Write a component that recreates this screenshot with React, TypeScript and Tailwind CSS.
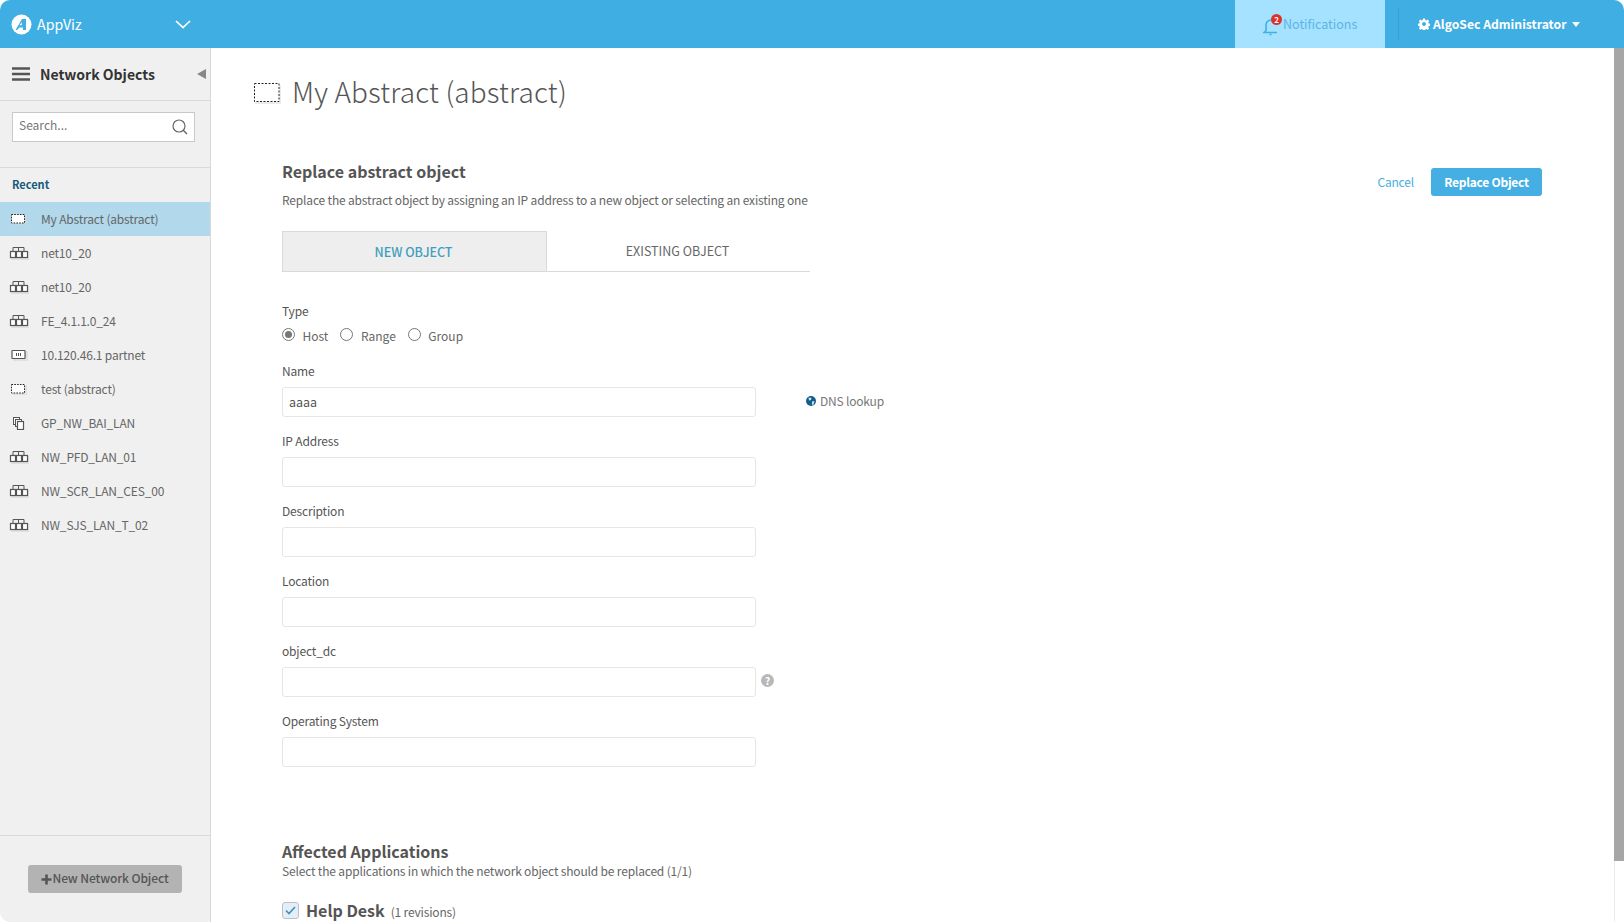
import React from "react";

const NetIcon = () => (
  <svg width="20" height="14" viewBox="0 0 20 14" className="shrink-0">
    <rect x="2" y="6" width="18" height="8" fill="#d9d9d9" opacity="0.7" />
    <path d="M4 5V1.5H15V5M9.5 1.5V5" fill="none" stroke="#555" strokeWidth="1" />
    <rect x="1.5" y="5.5" width="5" height="6" fill="#fff" stroke="#555" strokeWidth="1.2" />
    <rect x="7.5" y="5.5" width="5" height="6" fill="#fff" stroke="#555" strokeWidth="1.2" />
    <rect x="13.5" y="5.5" width="5" height="6" fill="#fff" stroke="#555" strokeWidth="1.2" />
  </svg>
);

const HostIcon = () => (
  <svg width="20" height="14" viewBox="0 0 20 14" className="shrink-0">
    <rect x="4" y="3" width="15" height="10" fill="#d9d9d9" opacity="0.7" />
    <rect x="3" y="2.5" width="13" height="8" rx="0.5" fill="#fff" stroke="#555" strokeWidth="1.2" />
    <path d="M7.5 5v3M9.5 5v3M11.5 5v3" stroke="#555" strokeWidth="1" />
  </svg>
);

const AbstractIcon = () => (
  <svg width="20" height="14" viewBox="0 0 20 14" className="shrink-0">
    <rect x="3" y="3" width="15" height="10" fill="#d5d5d5" opacity="0.6" />
    <rect x="2.5" y="2.5" width="13" height="8.5" fill="#fff" stroke="#222" strokeWidth="1" strokeDasharray="1.6 1.2" />
  </svg>
);

const GroupIcon = () => (
  <svg width="20" height="14" viewBox="0 0 20 14" className="shrink-0">
    <rect x="4.5" y="1.5" width="6" height="7" fill="#fff" stroke="#555" strokeWidth="1" />
    <rect x="6.5" y="3.5" width="6" height="7" fill="#fff" stroke="#555" strokeWidth="1" />
    <rect x="8.5" y="5.5" width="6" height="8" fill="#fff" stroke="#555" strokeWidth="1.2" />
  </svg>
);

const items: [string, React.ReactNode][] = [
  ["net10_20", <NetIcon />],
  ["net10_20", <NetIcon />],
  ["FE_4.1.1.0_24", <NetIcon />],
  ["10.120.46.1 partnet", <HostIcon />],
  ["test (abstract)", <AbstractIcon />],
  ["GP_NW_BAI_LAN", <GroupIcon />],
  ["NW_PFD_LAN_01", <NetIcon />],
  ["NW_SCR_LAN_CES_00", <NetIcon />],
  ["NW_SJS_LAN_T_02", <NetIcon />],
];

const Field = ({ label, value, after }: { label: string; value?: string; after?: React.ReactNode }) => (
  <div className="h-[70px]">
    <div className="h-[26px] text-[12px] tracking-[-0.17px] leading-[20px] text-[#555]">{label}</div>
    <div className="flex items-center">
      <div className="w-[474px] h-[30px] border border-[#e6e6e6] rounded-[3px] px-[6px] text-[12.5px] leading-[28px] text-[#555]">
        {value}
      </div>
      {after}
    </div>
  </div>
);

const Radio = ({ label, on, cls }: { label: string; on?: boolean; cls: string }) => (
  <div className={`flex items-center ${cls}`}>
    <span className="w-[13px] h-[13px] rounded-full border border-[#777] bg-white flex items-center justify-center -mt-[3px]">
      {on && <span className="w-[7px] h-[7px] rounded-full bg-[#777]" />}
    </span>
    <span className="ml-[7.5px] text-[12px] leading-[20px] text-[#666]">{label}</span>
  </div>
);

export default function App() {
  return (
    <div className="w-[1624px] h-[922px] overflow-hidden rounded-[10px] flex flex-col bg-white font-['Noto_Sans_CJK_SC',sans-serif]">
      <header className="h-[48px] shrink-0 bg-[#3faee2] flex items-stretch text-white">
        <div className="flex items-center w-[211px] pl-[11px] pr-[20px]">
          <svg width="21" height="21" viewBox="0 0 21 21" className="shrink-0">
            <circle cx="10.5" cy="10.5" r="10" fill="#fff" />
            <path d="M11 5h4v11h-3v-2.5H8.5L6 16H4.5z" fill="#3faee2" />
            <path d="M10.8 8.2v3h-2.4z" fill="#fff" />
          </svg>
          <span className="ml-[5px] text-[14.2px] leading-[24px]">AppViz</span>
          <svg width="16" height="9" viewBox="0 0 16 9" className="ml-auto">
            <path d="M1 1l7 6.5L15 1" fill="none" stroke="#fff" strokeWidth="1.7" />
          </svg>
        </div>
        <div className="flex-1" />
        <div className="w-[150px] bg-[#a5e2ff] flex items-center pl-[28px]">
          <span className="relative w-[20px] h-[24px] shrink-0">
            <svg width="16" height="18" viewBox="0 0 16 18" className="absolute left-0 top-[6px]">
              <path d="M3 13V7a5 5 0 0 1 5-5M3 13l-2 1.5h13M6.5 16.5h2" fill="none" stroke="#3faee2" strokeWidth="1.6" />
            </svg>
            <span className="absolute left-[8px] top-[2px] w-[11px] h-[11px] rounded-full bg-[#d9342b] text-white text-[8px] leading-[11px] text-center font-bold">2</span>
          </span>
          <span className="text-[12.5px] leading-[20px] text-[#5cb5e6]">Notifications</span>
        </div>
        <div className="w-[239px] flex items-center">
          <div className="w-px h-[32px] bg-[#37a0d2] ml-[13px]" />
          <svg width="12" height="12" viewBox="0 0 24 24" className="ml-[19px]" fill="#fff">
            <path fillRule="evenodd" d="M10 1h4l.6 3 2.2.9 2.6-1.7 2.8 2.8-1.7 2.6.9 2.2 3 .6v4l-3 .6-.9 2.2 1.7 2.6-2.8 2.8-2.6-1.7-2.2.9-.6 3h-4l-.6-3-2.2-.9-2.6 1.7-2.8-2.8 1.7-2.6-.9-2.2-3-.6v-4l3-.6.9-2.2-1.7-2.6 2.8-2.8 2.6 1.7 2.2-.9zM12 8a4 4 0 1 0 0 8 4 4 0 0 0 0-8z" />
          </svg>
          <span className="ml-[3px] text-[12.2px] leading-[20px] font-bold">AlgoSec Administrator</span>
          <span className="ml-[6px] w-0 h-0 border-x-[4px] border-x-transparent border-t-[5px] border-t-white" />
        </div>
      </header>

      <div className="flex-1 flex min-h-0">
        <aside className="w-[211px] shrink-0 bg-[#f0f0f0] border-r border-[#d9d9d9] flex flex-col">
          <div className="h-[53px] shrink-0 border-b border-[#d9d9d9] flex items-center pl-[12px] pr-[4px]">
            <svg width="18" height="14" viewBox="0 0 18 14" className="shrink-0">
              <path d="M0 1.5h18M0 7h18M0 12.5h18" stroke="#555" strokeWidth="2.6" />
            </svg>
            <span className="ml-[10px] text-[14px] leading-[22px] font-bold text-[#333]">Network Objects</span>
            <span className="ml-auto w-0 h-0 border-y-[5px] border-y-transparent border-r-[9px] border-r-[#888]" />
          </div>
          <div className="h-[67px] shrink-0 border-b border-[#d9d9d9] pl-[12px] pt-[11px]">
            <div className="w-[183px] h-[30px] bg-white border border-[#c9c9c9] flex items-center pl-[6px] pr-[6px]">
              <span className="text-[12px] leading-[20px] -mt-[4px] text-[#777]">Search...</span>
              <svg width="16" height="16" viewBox="0 0 16 16" className="ml-auto">
                <circle cx="7" cy="7" r="6" fill="none" stroke="#666" strokeWidth="1.2" />
                <path d="M11 11l4 4" stroke="#666" strokeWidth="1.4" />
              </svg>
            </div>
          </div>
          <div className="h-[34px] shrink-0 pl-[12px] pt-[7px] text-[11px] leading-[18px] font-bold text-[#135a7c]">Recent</div>
          <div className="h-[34px] shrink-0 bg-[#b1d8eb] flex items-center pl-[9px]">
            <AbstractIcon />
            <span className="ml-[12px] -mt-[1px] text-[12px] tracking-[-0.18px] leading-[18px] text-[#666]">My Abstract (abstract)</span>
          </div>
          {items.map(([t, ic], i) => (
            <div key={i} className="h-[34px] shrink-0 flex items-center pl-[9px]">
              {ic}
              <span className="ml-[12px] -mt-[1px] text-[12px] tracking-[-0.18px] leading-[18px] text-[#666]">{t}</span>
            </div>
          ))}
          <div className="mt-auto h-[87px] shrink-0 border-t border-[#d9d9d9] pl-[28px] pt-[29px]">
            <div className="w-[154px] h-[28px] bg-[#b3b3b3] rounded-[3px] flex items-center justify-center text-[12px] tracking-[-0.1px] leading-[20px] text-[#555] font-medium">
              <svg width="11" height="11" viewBox="0 0 11 11" className="shrink-0">
                <path d="M5.5 0.5v10M0.5 5.5h10" stroke="#555" strokeWidth="2.6" />
              </svg>
              <span className="-mt-[2px]">New Network Object</span>
            </div>
          </div>
        </aside>

        <main className="flex-1 min-w-0 overflow-hidden pl-[42px]">
          <div className="flex items-center h-[40px] mt-[25px]">
            <svg width="28" height="22" viewBox="0 0 28 22" className="shrink-0">
              <rect x="2" y="3" width="26" height="19" fill="#ddd" opacity="0.6" />
              <rect x="1.5" y="1.5" width="24.5" height="18" fill="#fff" stroke="#222" strokeWidth="1" strokeDasharray="2 1.5" />
            </svg>
            <h1 className="ml-[11px] -mt-[4px] text-[28px] tracking-[0.15px] leading-[40px] font-light text-[#555]">My Abstract (abstract)</h1>
          </div>

          <div className="ml-[29px] w-[1261px] mt-[45px] flex justify-between">
            <div>
              <h2 className="text-[16px] leading-[26px] font-bold text-[#555]">Replace abstract object</h2>
              <p className="mt-[6px] text-[12px] tracking-[-0.17px] leading-[20px] text-[#666]">
                Replace the abstract object by assigning an IP address to a new object or selecting an existing one
              </p>
            </div>
            <div className="flex items-center h-[28px] mt-[10px] pr-px">
              <span className="text-[12px] tracking-[-0.17px] leading-[20px] text-[#45aee3]">Cancel</span>
              <span className="ml-[17px] w-[111px] h-[28px] bg-[#45aee3] rounded-[3px] text-white text-[12px] tracking-[-0.25px] leading-[27px] text-center font-bold">Replace Object</span>
            </div>
          </div>

          <div className="ml-[29px] mt-[21px]">
            <div className="flex w-[528px] h-[41px] border-b border-[#d9d9d9]">
              <div className="w-[265px] bg-[#eeeeee] border-t border-x border-[#d9d9d9] pr-[2px] text-center text-[12.5px] leading-[40px] font-medium text-[#3e9fc0]">NEW OBJECT</div>
              <div className="w-[263px] pr-[2px] text-center text-[12.5px] leading-[40px] text-[#666]">EXISTING OBJECT</div>
            </div>

            <div className="mt-[29px] h-[25px] text-[12px] tracking-[-0.17px] leading-[20px] text-[#555]">Type</div>
            <div className="flex h-[35px] items-start">
              <Radio label="Host" on cls="" />
              <Radio label="Range" cls="ml-[12px]" />
              <Radio label="Group" cls="ml-[12px]" />
            </div>

            <Field
              label="Name"
              value="aaaa"
              after={
                <div className="ml-[50px] flex items-center -mt-[3px]">
                  <svg width="10" height="10" viewBox="0 0 10 10">
                    <circle cx="5" cy="5" r="5" fill="#135f8a" />
                    <path d="M2.5 1.5l3 .5-.5 2-2 .5zM6 5.5l2.5-.5-1 3.5-1.5.5z" fill="#cfe5f2" />
                  </svg>
                  <span className="ml-[4px] text-[12px] tracking-[-0.2px] leading-[18px] text-[#777]">DNS lookup</span>
                </div>
              }
            />
            <Field label="IP Address" />
            <Field label="Description" />
            <Field label="Location" />
            <Field
              label="object_dc"
              after={
                <span className="ml-[5px] -mt-[3px] w-[13px] h-[13px] rounded-full bg-[#b8b8b8] text-white text-[10px] leading-[13px] text-center font-bold">?</span>
              }
            />
            <Field label="Operating System" />

            <h2 className="mt-[57px] text-[16px] leading-[26px] font-bold text-[#555]">Affected Applications</h2>
            <p className="-mt-[3px] text-[12px] tracking-[-0.17px] leading-[20px] text-[#666]">
              Select the applications in which the network object should be replaced (1/1)
            </p>
            <div className="mt-[16px] flex items-center">
              <span className="w-[17px] h-[17px] rounded-[3px] bg-[#e6eef5] border border-[#b9c2cc] flex items-center justify-center">
                <svg width="11" height="9" viewBox="0 0 11 9">
                  <path d="M1 4.5l3 3 6-6.5" fill="none" stroke="#3a8fc8" strokeWidth="1.6" />
                </svg>
              </span>
              <span className="ml-[7px] text-[16px] leading-[26px] font-bold text-[#555]">Help Desk</span>
              <span className="ml-[6px] mt-[3px] text-[12px] tracking-[-0.17px] leading-[18px] text-[#666]">(1 revisions)</span>
            </div>
          </div>
        </main>

        <div className="w-[10px] shrink-0 border-l border-[#ececec] bg-white">
          <div className="h-[813px] -ml-px bg-[#a6a6a6]" />
        </div>
      </div>
    </div>
  );
}
